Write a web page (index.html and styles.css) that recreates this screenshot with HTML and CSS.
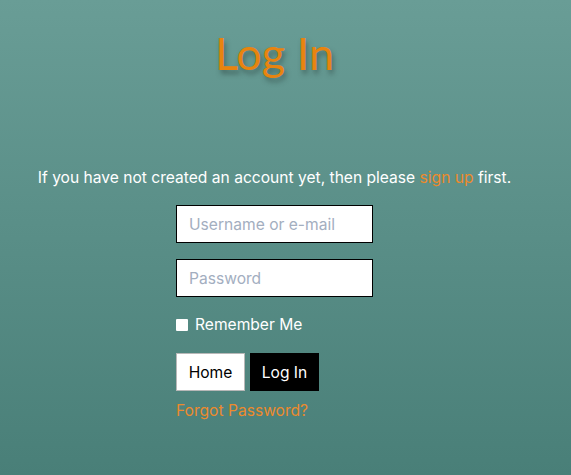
FILE: index.html
```html
<!DOCTYPE html>
<html>
<head>
<meta charset="utf-8">
<link rel="stylesheet" href="styles.css">
</head>
<body>
<main class="page">
  <h1 class="title">Log In</h1>
  <p class="intro">If you have not created an account yet, then please <a href="#" class="link">sign up</a> first.</p>
  <form class="form">
    <input class="field" type="text" placeholder="Username or e-mail">
    <input class="field" type="password" placeholder="Password">
    <label class="remember"><span class="box"></span>Remember Me</label>
    <div class="buttons">
      <button type="button" class="btn btn-home">Home</button>
      <button type="button" class="btn btn-login">Log In</button>
    </div>
    <a href="#" class="link forgot">Forgot Password?</a>
  </form>
</main>
</body>
</html>
```
FILE: styles.css
```css
html, body {
  margin: 0;
  height: 100%;
}
body {
  background: linear-gradient(to bottom, #699d96 0%, #497f78 100%);
  font-family: Inter, "Open Sans", sans-serif;
  color: #ffffff;
}
.page {
  width: 549px;
  display: flex;
  flex-direction: column;
  align-items: center;
}
.title {
  margin: 27px 0 0;
  font-family: Lato, sans-serif;
  font-weight: 400;
  font-size: 45px;
  line-height: 52px;
  color: #e8840f;
  text-shadow: 2px 4px 5px rgba(40, 60, 55, 0.5);
}
.intro {
  margin: 89px 0 0;
  font-size: 15.6px;
  line-height: 20px;
}
.link {
  color: #ec8a2c;
  text-decoration: none;
}
.form {
  display: flex;
  flex-direction: column;
  align-items: flex-start;
  width: 197px;
  margin: 17px 0 0;
}
.field {
  box-sizing: border-box;
  width: 197px;
  height: 38px;
  margin: 0 0 16px;
  padding: 0 12px;
  border: 1px solid #000;
  background: #fff;
  font-family: inherit;
  font-size: 15.6px;
  color: #333;
  outline: none;
}
.field::placeholder {
  color: #a3aebf;
}
.remember {
  display: flex;
  align-items: center;
  gap: 7px;
  margin-top: 2px;
  font-size: 15.6px;
  line-height: 20px;
}
.box {
  width: 12px;
  height: 12px;
  background: #fff;
  border-radius: 1px;
}
.buttons {
  display: flex;
  gap: 5px;
  margin-top: 18px;
}
.btn {
  box-sizing: border-box;
  height: 38px;
  width: 69px;
  padding: 0;
  font-family: inherit;
  font-size: 15.6px;
}
.btn-home {
  background: #fff;
  color: #000;
  border: 1px solid #b8b8b8;
}
.btn-login {
  background: #000;
  color: #fff;
  border: 1px solid #000;
}
.forgot {
  margin-top: 10px;
  font-size: 15.6px;
  line-height: 20px;
}
```
